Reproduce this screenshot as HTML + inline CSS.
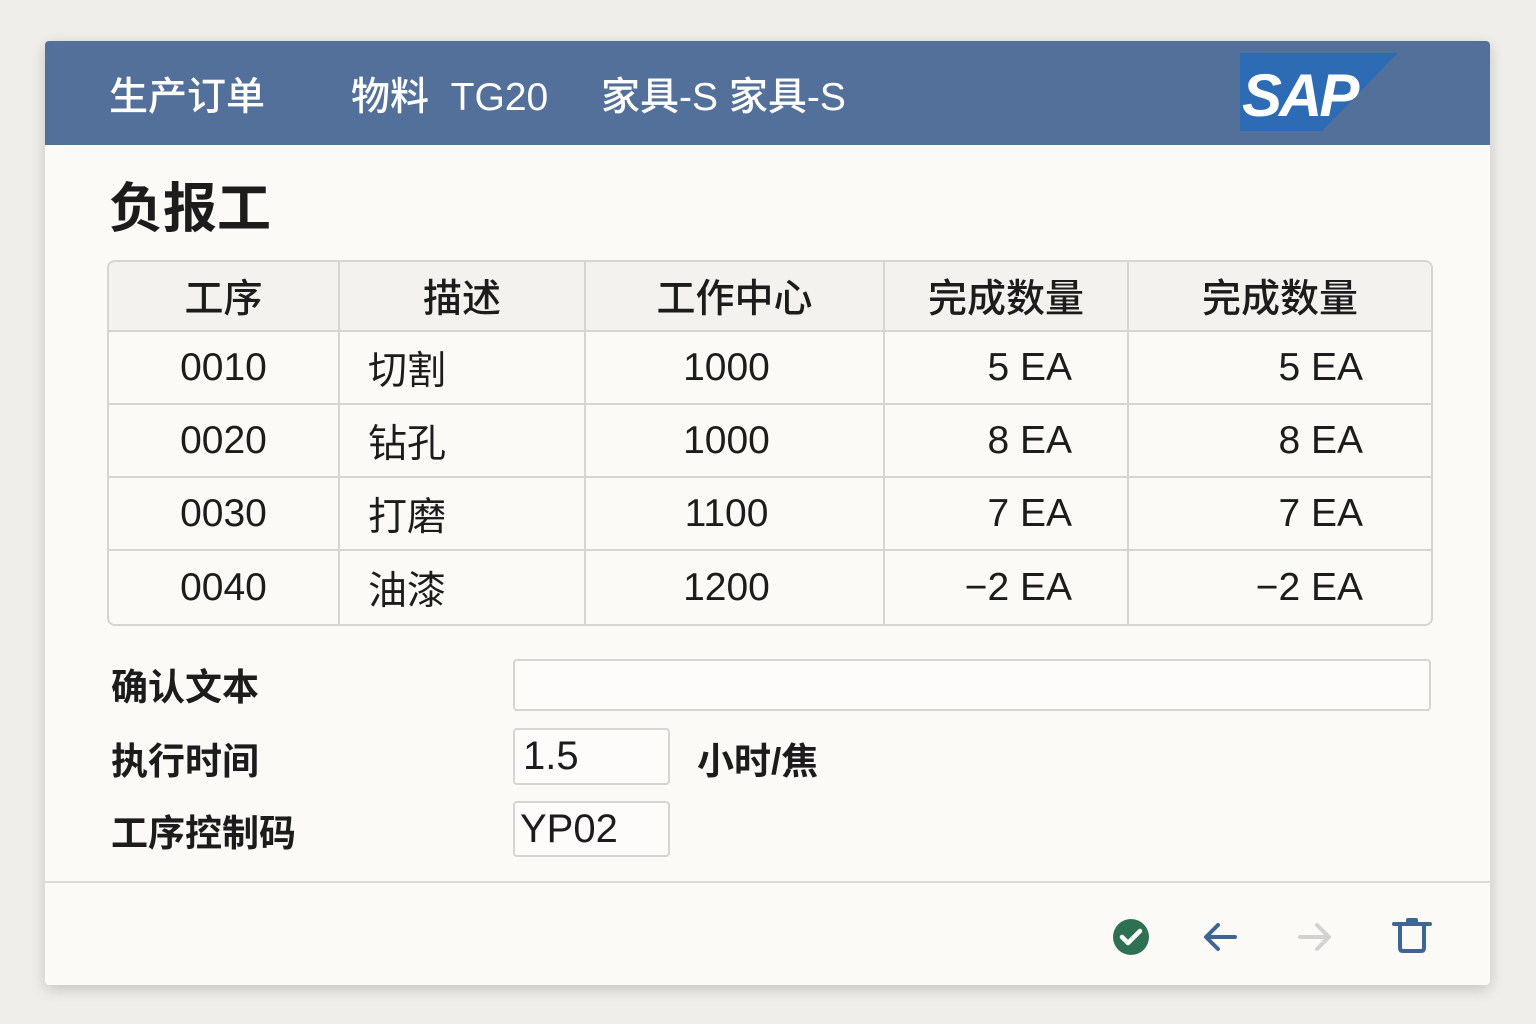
<!DOCTYPE html>
<html><head><meta charset="utf-8"><style>
*{margin:0;padding:0;box-sizing:border-box}
body{width:1536px;height:1024px;background:#efeeea;font-family:"Liberation Sans","Noto Sans CJK SC",sans-serif;color:#1c1c1c;position:relative;overflow:hidden}
.card{position:absolute;left:45px;top:41px;width:1445px;height:944px;background:#fbfaf7;border-radius:4px;box-shadow:0 4px 14px rgba(0,0,0,.18);overflow:hidden}
.hdr{position:absolute;left:0;top:0;width:100%;height:104px;background:#53709a}
.hdr span{position:absolute;top:33px;font-size:39px;color:#fff;line-height:48px;white-space:nowrap;font-weight:500}
.abs{position:absolute;white-space:nowrap}
table{position:absolute;left:62px;top:219px;border-collapse:separate;border-spacing:0;border:2px solid #d6d5d2;border-radius:8px;overflow:hidden}
td{border-right:2px solid #d6d5d2;border-bottom:2px solid #d6d5d2;font-size:39px;height:73px;padding:0}
tr td:last-child{border-right:none}
tr:last-child td{border-bottom:none}
tr.h td{background:#f4f2ef;height:70px;text-align:center;font-weight:500}
.c{text-align:center}.r{text-align:right;padding-right:55px}
.box{position:absolute;border:2px solid #d6d5d2;border-radius:4px;background:#fdfcfa;font-size:40px;line-height:52px;padding-left:8px}
.lbl{position:absolute;font-size:37px;left:66px;font-weight:bold}
</style></head><body>
<div class="card">
<div class="hdr">
<span style="left:64px">生产订单</span>
<span style="left:306px">物料 &nbsp;TG20</span>
<span style="left:556px">家具-S 家具-S</span>
<svg style="position:absolute;left:1195px;top:12px" width="160" height="78" viewBox="0 0 160 78"><polygon points="0,0 158,0 82,78 0,78" fill="#2d6cb4"/><text x="2" y="63" font-family="Liberation Sans" font-weight="bold" font-size="60" fill="#fff" letter-spacing="-3" font-style="italic">SAP</text></svg>
</div>
<div class="abs" style="left:64px;top:136px;font-size:54px;font-weight:bold;line-height:64px">负报工</div>
<table>
<tr class="h"><td style="width:231px">工序</td><td style="width:246px">描述</td><td style="width:299px">工作中心</td><td style="width:244px">完成数量</td><td style="width:302px">完成数量</td></tr>
<tr><td class="c">0010</td><td style="padding-left:28px">切割</td><td class="c" style="padding-right:16px">1000</td><td class="r">5 EA</td><td class="r" style="padding-right:68px">5 EA</td></tr>
<tr><td class="c">0020</td><td style="padding-left:28px">钻孔</td><td class="c" style="padding-right:16px">1000</td><td class="r">8 EA</td><td class="r" style="padding-right:68px">8 EA</td></tr>
<tr><td class="c">0030</td><td style="padding-left:28px">打磨</td><td class="c" style="padding-right:16px">1100</td><td class="r">7 EA</td><td class="r" style="padding-right:68px">7 EA</td></tr>
<tr><td class="c">0040</td><td style="padding-left:28px">油漆</td><td class="c" style="padding-right:16px">1200</td><td class="r">−2 EA</td><td class="r" style="padding-right:68px">−2 EA</td></tr>
</table>
<div class="lbl" style="top:616px">确认文本</div>
<div class="box" style="left:468px;top:618px;width:918px;height:52px"></div>
<div class="lbl" style="top:690px">执行时间</div>
<div class="box" style="left:468px;top:687px;width:157px;height:57px">1.5</div>
<div class="abs" style="left:652px;top:690px;font-size:37px;font-weight:bold">小时/焦</div>
<div class="lbl" style="top:762px">工序控制码</div>
<div class="box" style="left:468px;top:760px;width:157px;height:56px;padding-left:5px">YP02</div>
<div class="abs" style="left:0;top:840px;width:100%;height:2px;background:#dddcd8"></div>
<svg style="position:absolute;left:1065px;top:874px" width="330" height="44" viewBox="0 0 330 44">
<circle cx="21" cy="22" r="18" fill="#2e7152"/><path d="M12 22 L18 28 L30 16" stroke="#fff" stroke-width="4.5" fill="none" stroke-linecap="round" stroke-linejoin="round"/>
<path d="M97 22 H125 M108 10 L96 22 L108 34" stroke="#3f6594" stroke-width="4" fill="none" stroke-linecap="round" stroke-linejoin="round"/>
<path d="M190 22 H218 M207 10 L219 22 L207 34" stroke="#d2d2d0" stroke-width="4" fill="none" stroke-linecap="round" stroke-linejoin="round"/>
<path d="M284 9 H320 M298 9 V5 H306 V9 M290 10 V33 Q290 36 293 36 H311 Q314 36 314 33 V10" stroke="#3f6594" stroke-width="4" fill="none" stroke-linecap="round" stroke-linejoin="round"/>
</svg>
</div>
</body></html>
